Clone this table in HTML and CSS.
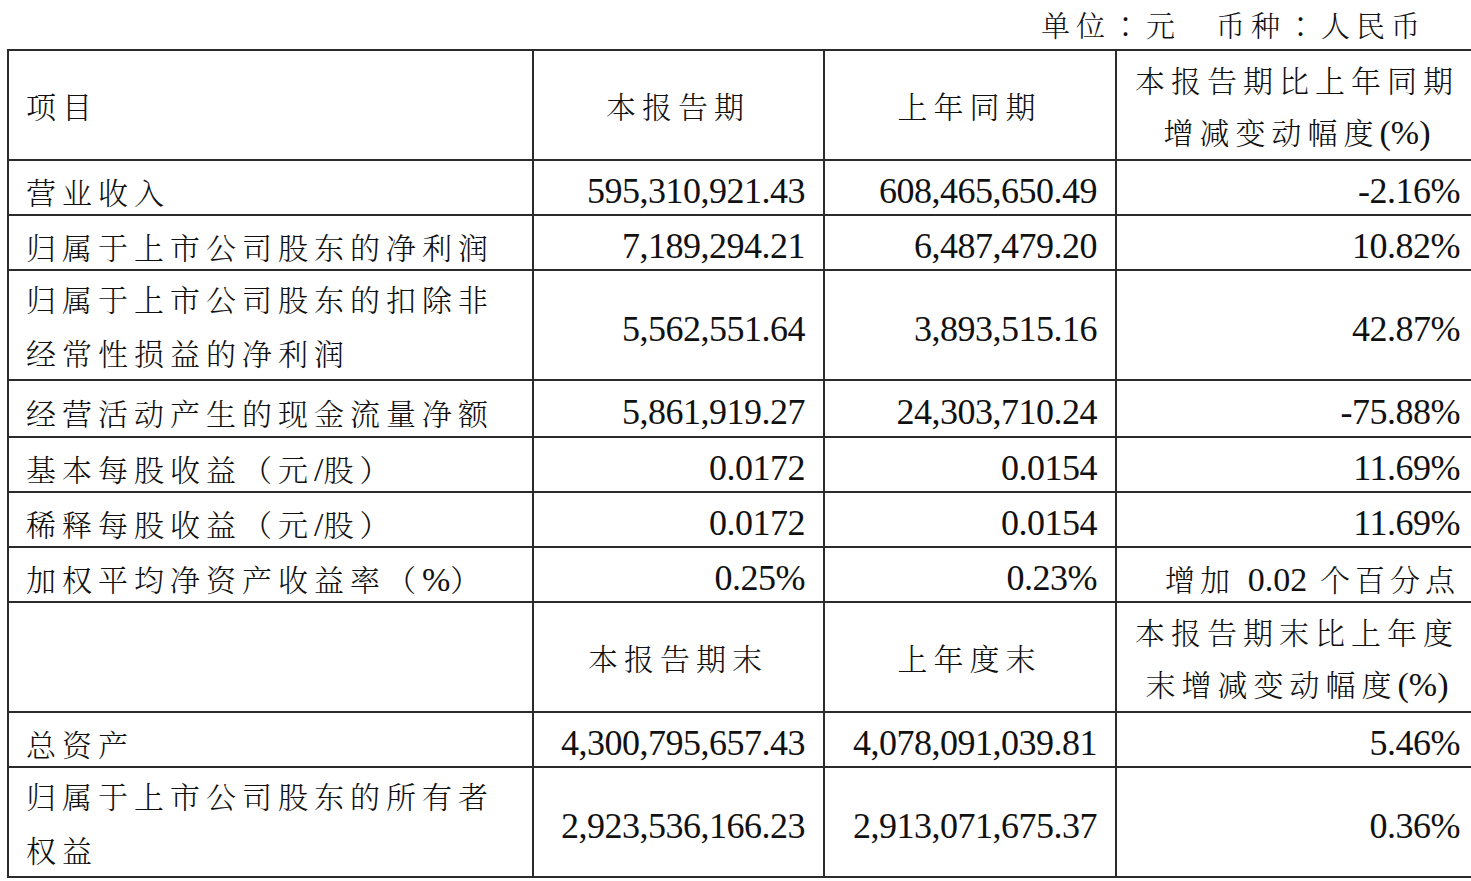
FILE: index.html
```html
<!DOCTYPE html>
<html lang="zh-CN">
<head>
<meta charset="utf-8">
<title>主要会计数据</title>
<link rel="stylesheet" href="styles.css">
</head>
<body>
<div class="page">
  <div class="unit">单位<span class="colon">：</span>元　币种<span class="colon">：</span>人民币</div>
  <table class="data">
    <colgroup>
      <col class="c1"><col class="c2"><col class="c3"><col class="c4">
    </colgroup>
    <tr class="dbl head">
      <td class="label">项目</td>
      <td class="ctr">本报告期</td>
      <td class="ctr">上年同期</td>
      <td class="ctr">本报告期比上年同期<br>增减变动幅度<span class="lat">(%)</span></td>
    </tr>
    <tr class="sgl">
      <td class="label">营业收入</td>
      <td class="num">595,310,921.43</td>
      <td class="num">608,465,650.49</td>
      <td class="num">-2.16%</td>
    </tr>
    <tr class="sgl">
      <td class="label">归属于上市公司股东的净利润</td>
      <td class="num">7,189,294.21</td>
      <td class="num">6,487,479.20</td>
      <td class="num">10.82%</td>
    </tr>
    <tr class="dbl">
      <td class="label">归属于上市公司股东的扣除非<br>经常性损益的净利润</td>
      <td class="num">5,562,551.64</td>
      <td class="num">3,893,515.16</td>
      <td class="num">42.87%</td>
    </tr>
    <tr class="sgl tall">
      <td class="label">经营活动产生的现金流量净额</td>
      <td class="num">5,861,919.27</td>
      <td class="num">24,303,710.24</td>
      <td class="num">-75.88%</td>
    </tr>
    <tr class="sgl">
      <td class="label">基本每股收益（元<span class="lat">/</span>股）</td>
      <td class="num">0.0172</td>
      <td class="num">0.0154</td>
      <td class="num">11.69%</td>
    </tr>
    <tr class="sgl">
      <td class="label">稀释每股收益（元<span class="lat">/</span>股）</td>
      <td class="num">0.0172</td>
      <td class="num">0.0154</td>
      <td class="num">11.69%</td>
    </tr>
    <tr class="sgl">
      <td class="label">加权平均净资产收益率（<span class="lat">%</span>）</td>
      <td class="num">0.25%</td>
      <td class="num">0.23%</td>
      <td class="num mixed">增加 <span class="lat">0.02</span> 个百分点</td>
    </tr>
    <tr class="dbl head">
      <td class="label"></td>
      <td class="ctr">本报告期末</td>
      <td class="ctr">上年度末</td>
      <td class="ctr">本报告期末比上年度<br>末增减变动幅度<span class="lat">(%)</span></td>
    </tr>
    <tr class="sgl">
      <td class="label">总资产</td>
      <td class="num">4,300,795,657.43</td>
      <td class="num">4,078,091,039.81</td>
      <td class="num">5.46%</td>
    </tr>
    <tr class="dbl">
      <td class="label">归属于上市公司股东的所有者<br>权益</td>
      <td class="num">2,923,536,166.23</td>
      <td class="num">2,913,071,675.37</td>
      <td class="num">0.36%</td>
    </tr>
  </table>
</div>
</body>
</html>
```

FILE: styles.css
```css
html, body {
  margin: 0;
  padding: 0;
  background: #ffffff;
  overflow: hidden;
}

.page {
  width: 1500px;
  color: #111111;
  font-family: "Noto Serif CJK SC", "Noto Sans CJK SC", serif;
}

.unit {
  width: 1426px;
  height: 49px;
  display: flex;
  align-items: center;
  justify-content: flex-end;
  font-family: "Noto Serif CJK SC", "Noto Sans CJK SC", sans-serif;
  font-weight: 300;
  font-size: 29px;
  letter-spacing: 6px;
}

.colon {
  font-family: "Noto Sans CJK TC", "Noto Sans CJK SC", sans-serif;
}

.data {
  margin-left: 7px;
  border-collapse: collapse;
  table-layout: fixed;
  width: 1471px;
}

.c1 { width: 525px; }
.c2 { width: 291px; }
.c3 { width: 292px; }
.c4 { width: 363px; }

.data td {
  border: 2px solid #2b2b2b;
  padding: 0 18px 0 17px;
  vertical-align: middle;
  white-space: nowrap;
}

.sgl td {
  height: 45px;
  padding-top: 8px;
}
.tall td { height: 47px; }
.dbl td { height: 108px; }
.dbl .num {
  height: 100px;
  padding-top: 8px;
}

.label,
.ctr {
  font-family: "Noto Serif CJK SC", "Noto Sans CJK SC", sans-serif;
  font-weight: 300;
  font-size: 30px;
  letter-spacing: 6px;
  line-height: 45px;
}

.dbl .label,
.dbl .ctr { line-height: 54px; }

.label { text-align: left; }

.ctr { text-align: center; }

.head .ctr { line-height: 52px; }

.lat {
  font-family: "Liberation Serif", "Times New Roman", serif;
  font-weight: 400;
  font-size: 34px;
  line-height: 1;
  letter-spacing: 0;
}

.num {
  text-align: right;
  font-family: "Liberation Serif", "Times New Roman", serif;
  font-size: 36px;
  letter-spacing: -0.5px;
  line-height: 45px;
}

.mixed {
  font-family: "Noto Serif CJK SC", "Noto Sans CJK SC", sans-serif;
  font-weight: 300;
  font-size: 30px;
  letter-spacing: 5px;
  padding-right: 12px;
}
```
